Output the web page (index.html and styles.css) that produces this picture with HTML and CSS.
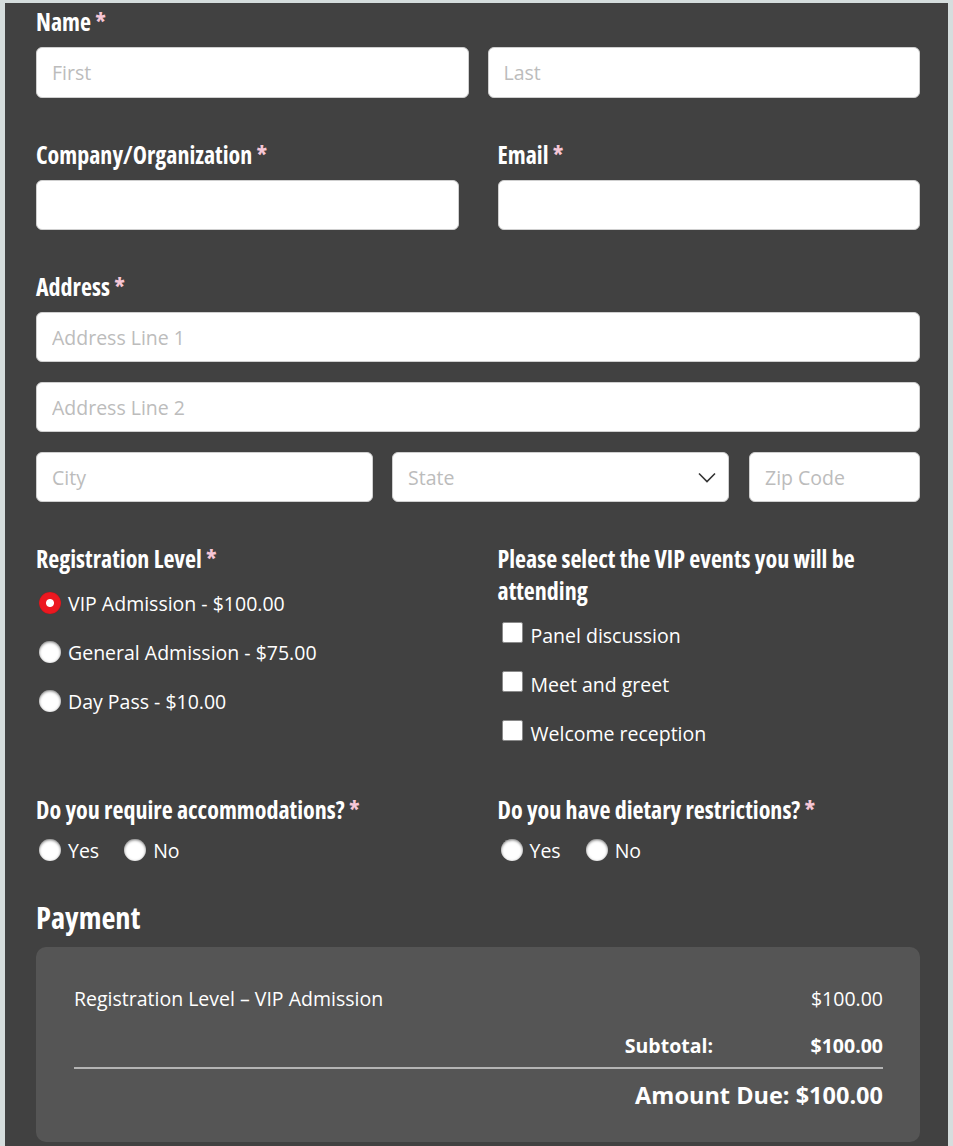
FILE: index.html
```html
<!DOCTYPE html>
<html lang="en">
<head>
<meta charset="utf-8">
<title>Registration</title>
<link rel="stylesheet" href="styles.css">
</head>
<body>
<div class="frame">
<form class="form">
  <div class="group">
    <div class="label">Name <span class="req">*</span></div>
    <div class="row2 tight">
      <input class="field" type="text" placeholder="First">
      <input class="field" type="text" placeholder="Last">
    </div>
  </div>

  <div class="row2 group">
    <div>
      <div class="label">Company/Organization <span class="req">*</span></div>
      <input class="field" type="text">
    </div>
    <div>
      <div class="label">Email <span class="req">*</span></div>
      <input class="field" type="email">
    </div>
  </div>

  <div class="group">
    <div class="label">Address <span class="req">*</span></div>
    <div class="stack">
      <input class="field" type="text" placeholder="Address Line 1">
      <input class="field" type="text" placeholder="Address Line 2">
      <div class="row3">
        <input class="field" type="text" placeholder="City">
        <div class="select-wrap">
          <div class="field select">State</div>
          <svg class="chev" width="18" height="11" viewBox="0 0 18 11"><path d="M1 1.5 L9 9.5 L17 1.5" fill="none" stroke="#333" stroke-width="1.6"/></svg>
        </div>
        <input class="field" type="text" placeholder="Zip Code">
      </div>
    </div>
  </div>

  <div class="row2 group2">
    <div>
      <div class="label">Registration Level <span class="req">*</span></div>
      <div class="options">
        <label class="opt"><input type="radio" name="lvl" class="radio" checked><span>VIP Admission - $100.00</span></label>
        <label class="opt"><input type="radio" name="lvl" class="radio"><span>General Admission - $75.00</span></label>
        <label class="opt"><input type="radio" name="lvl" class="radio"><span>Day Pass - $10.00</span></label>
      </div>
    </div>
    <div>
      <div class="label">Please select the VIP events you will be attending</div>
      <div class="options">
        <label class="opt"><input type="checkbox" class="check"><span>Panel discussion</span></label>
        <label class="opt"><input type="checkbox" class="check"><span>Meet and greet</span></label>
        <label class="opt"><input type="checkbox" class="check"><span>Welcome reception</span></label>
      </div>
    </div>
  </div>

  <div class="row2 group3">
    <div>
      <div class="label">Do you require accommodations? <span class="req">*</span></div>
      <div class="inline">
        <label class="opt"><input type="radio" name="acc" class="radio"><span>Yes</span></label>
        <label class="opt"><input type="radio" name="acc" class="radio"><span>No</span></label>
      </div>
    </div>
    <div>
      <div class="label">Do you have dietary restrictions? <span class="req">*</span></div>
      <div class="inline">
        <label class="opt"><input type="radio" name="diet" class="radio"><span>Yes</span></label>
        <label class="opt"><input type="radio" name="diet" class="radio"><span>No</span></label>
      </div>
    </div>
  </div>

  <h2 class="heading">Payment</h2>
  <div class="payment">
    <div class="pay-line">
      <span>Registration Level – VIP Admission</span>
      <span>$100.00</span>
    </div>
    <div class="pay-sub">
      <span class="sub-label">Subtotal:</span>
      <span class="sub-value">$100.00</span>
    </div>
    <div class="pay-due">Amount Due: $100.00</div>
  </div>
</form>
</div>
</body>
</html>
```

FILE: styles.css
```css
* { box-sizing: border-box; }
html, body { margin: 0; padding: 0; }
body {
  background: #d5dddd;
  font-family: "Open Sans", "Liberation Sans", sans-serif;
  color: #fff;
}
.frame {
  padding: 3px 5px 0 5px;
  background: #d5dddd;
  min-height: 1146px;
}
.form {
  background: #414141;
  padding: 2px 28px 8px 31px;
  min-height: 1143px;
}
.label {
  font-family: "Open Sans", "Liberation Sans Narrow", sans-serif;
  font-stretch: 75%;
  font-weight: 700;
  font-size: 24px;
  line-height: 32px;
  padding-top: 1px;
  margin-bottom: 9px;
}
.req { color: #f6c6d6; }
.group { margin-bottom: 40px; }
.row2 {
  display: grid;
  grid-template-columns: 1fr 1fr;
  column-gap: 39px;
}
.row2.tight { column-gap: 19px; }
.stack { display: flex; flex-direction: column; gap: 20px; }
.row3 {
  display: grid;
  grid-template-columns: 337px 337px 1fr;
  column-gap: 19px;
}
.row3 > :last-child { margin-left: 1px; width: calc(100% - 1px); }
.field {
  display: block;
  width: 100%;
  height: 50px;
  background: #fff;
  border: 1px solid #cfcfcf;
  border-radius: 6px;
  padding: 0 15px;
  font-family: "Open Sans", sans-serif;
  font-size: 19.5px;
  color: #333;
  outline: none;
}
.tight .field { height: 51px; }
.field::placeholder { color: #bcbcbc; }
.select-wrap { position: relative; }
.select { display: flex; align-items: center; color: #bcbcbc; }
.chev { position: absolute; right: 13px; top: 20px; }
.group2 { margin-bottom: 36px; }
.options { margin-top: -6px; }
.opt {
  display: flex;
  align-items: center;
  height: 49px;
  font-size: 19.5px;
  cursor: pointer;
}
.opt span { padding-top: 1px; }
.radio {
  appearance: none;
  -webkit-appearance: none;
  width: 22px;
  height: 22px;
  margin: 0 7px 0 3px;
  border-radius: 50%;
  background: #fff;
  box-shadow: inset 0 1px 3px rgba(0,0,0,0.55);
  flex: none;
}
.radio:checked {
  background: radial-gradient(circle, #fff 0 3.5px, #ec1820 4.5px);
  box-shadow: inset 0 0 1px rgba(0,0,0,0.4);
}
.check {
  appearance: none;
  -webkit-appearance: none;
  width: 21px;
  height: 21px;
  margin: -5px 8px 0 4px;
  border-radius: 2px;
  background: #fff;
  border: 1px solid #8a8a8a;
  flex: none;
}
.inline { display: flex; gap: 22px; margin-top: -10px; }
.group3 { margin-bottom: 24px; }
.heading {
  font-family: "Open Sans", "Liberation Sans Narrow", sans-serif;
  font-stretch: 75%;
  font-weight: 700;
  font-size: 30.5px;
  line-height: 38px;
  margin: 0 0 11px 0;
}
.payment {
  background: #555555;
  border-radius: 10px;
  padding: 38px 37px 32px 38px;
  font-size: 19.5px;
}
.pay-line {
  display: flex;
  justify-content: space-between;
  line-height: 27px;
}
.pay-sub {
  display: flex;
  justify-content: flex-end;
  font-weight: 700;
  line-height: 27px;
  margin-top: 20px;
  padding-bottom: 8px;
  border-bottom: 2px solid #b4b4b4;
}
.sub-value { width: 170px; text-align: right; }
.pay-due {
  text-align: right;
  font-weight: 700;
  font-size: 23.5px;
  line-height: 30px;
  margin-top: 11px;
}
```
